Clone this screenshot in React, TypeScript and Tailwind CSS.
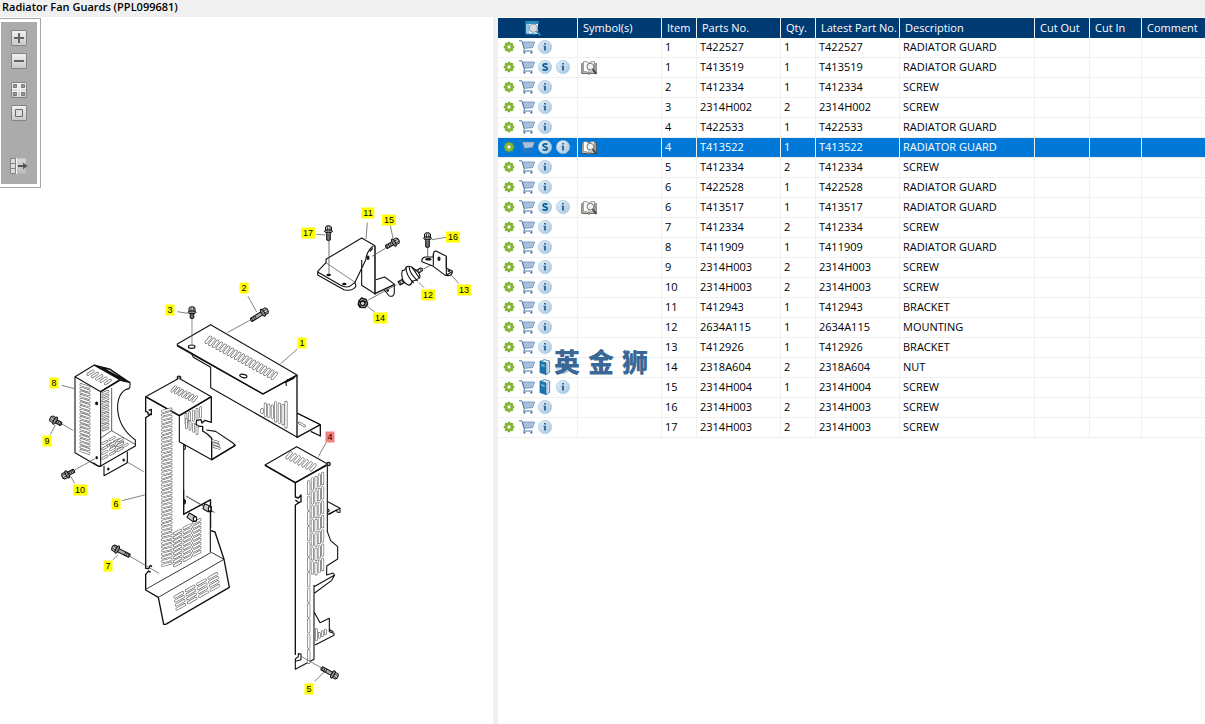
import { useState, type ReactNode } from 'react';

type Extra = 's' | 'book' | 'info';
type Part = { item: number; no: string; qty: number; desc: string; extras: Extra[]; symbol?: boolean };

const parts: Part[] = [
  { item: 1, no: 'T422527', qty: 1, desc: 'RADIATOR GUARD', extras: ['info'] },
  { item: 1, no: 'T413519', qty: 1, desc: 'RADIATOR GUARD', extras: ['s', 'info'], symbol: true },
  { item: 2, no: 'T412334', qty: 1, desc: 'SCREW', extras: ['info'] },
  { item: 3, no: '2314H002', qty: 2, desc: 'SCREW', extras: ['info'] },
  { item: 4, no: 'T422533', qty: 1, desc: 'RADIATOR GUARD', extras: ['info'] },
  { item: 4, no: 'T413522', qty: 1, desc: 'RADIATOR GUARD', extras: ['s', 'info'], symbol: true },
  { item: 5, no: 'T412334', qty: 2, desc: 'SCREW', extras: ['info'] },
  { item: 6, no: 'T422528', qty: 1, desc: 'RADIATOR GUARD', extras: ['info'] },
  { item: 6, no: 'T413517', qty: 1, desc: 'RADIATOR GUARD', extras: ['s', 'info'], symbol: true },
  { item: 7, no: 'T412334', qty: 2, desc: 'SCREW', extras: ['info'] },
  { item: 8, no: 'T411909', qty: 1, desc: 'RADIATOR GUARD', extras: ['info'] },
  { item: 9, no: '2314H003', qty: 2, desc: 'SCREW', extras: ['info'] },
  { item: 10, no: '2314H003', qty: 2, desc: 'SCREW', extras: ['info'] },
  { item: 11, no: 'T412943', qty: 1, desc: 'BRACKET', extras: ['info'] },
  { item: 12, no: '2634A115', qty: 1, desc: 'MOUNTING', extras: ['info'] },
  { item: 13, no: 'T412926', qty: 1, desc: 'BRACKET', extras: ['info'] },
  { item: 14, no: '2318A604', qty: 2, desc: 'NUT', extras: ['book', 'info'] },
  { item: 15, no: '2314H004', qty: 1, desc: 'SCREW', extras: ['book', 'info'] },
  { item: 16, no: '2314H003', qty: 2, desc: 'SCREW', extras: ['info'] },
  { item: 17, no: '2314H003', qty: 2, desc: 'SCREW', extras: ['info'] },
];

/* Centre of every callout on the drawing canvas. */
const callouts = [
  { n: 1, x: 302, y: 326 },
  { n: 2, x: 244, y: 271 },
  { n: 3, x: 170, y: 293 },
  { n: 4, x: 330, y: 420 },
  { n: 5, x: 309, y: 672 },
  { n: 6, x: 116, y: 487 },
  { n: 7, x: 108, y: 549 },
  { n: 8, x: 54, y: 366 },
  { n: 9, x: 47, y: 424 },
  { n: 10, x: 80, y: 473 },
  { n: 11, x: 368, y: 196 },
  { n: 12, x: 428, y: 278 },
  { n: 13, x: 464, y: 273 },
  { n: 14, x: 380, y: 301 },
  { n: 15, x: 389, y: 203 },
  { n: 16, x: 453, y: 220 },
  { n: 17, x: 308, y: 216 },
];

function GearIcon() {
  return (
    <svg className="size-3 shrink-0" viewBox="0 0 12 12" aria-hidden="true">
      <g fill="#7cac2b">
        {[0, 45, 90, 135].map((a) => (
          <rect key={a} x="4.8" y="0.8" width="2.4" height="10.4" rx="0.5" transform={`rotate(${a} 6 6)`} />
        ))}
        <circle cx="6" cy="6" r="4.2" fill="#86b832" />
      </g>
      <circle cx="6" cy="6" r="1.9" fill="#fff" stroke="#6f9c26" strokeWidth="0.5" />
    </svg>
  );
}

function CartIcon() {
  return (
    <svg className="h-[14px] w-4 shrink-0" viewBox="0 0 16 14" aria-hidden="true">
      <path d="M3.4 2.1h12.1l-2 5.5-8.4.6z" fill="#dbe6f2" stroke="#5b84b4" strokeWidth="0.9" />
      <path d="M6 2.5v5.4M8 2.5v5.4M10 2.5v5.4M12 2.5v5M4 4h11M4.6 6h9.7" stroke="#7d9fc8" strokeWidth="0.6" />
      <path d="M0 .8h2.8L5.5 9.4 4.4 11h9.2" fill="none" stroke="#4f79ad" strokeWidth="1" />
      <circle cx="5.4" cy="12.6" r="1.1" fill="#4371a8" />
      <circle cx="12.4" cy="12.6" r="1.1" fill="#4371a8" />
    </svg>
  );
}

function Badge({ kind }: { kind: 's' | 'info' }) {
  return (
    <svg className="size-[14px] shrink-0" viewBox="0 0 14 14" aria-hidden="true">
      <defs>
        <linearGradient id="badge" x1="0" y1="0" x2="1" y2="1">
          <stop offset="0" stopColor="#e4f0f8" />
          <stop offset="1" stopColor="#a3c6e0" />
        </linearGradient>
      </defs>
      <circle cx="7" cy="7" r="6.6" fill="url(#badge)" stroke="#a5c4dc" strokeWidth="0.7" />
      {kind === 'info' ? (
        <path d="M6 3h2v1.6H6zM5.4 5.8H8v4.6H6V6.8h-.6z" fill="#336b9f" />
      ) : (
        <path d="M9.4 4.5C8.4 3.6 5 3.3 5 5.2c0 2 4.3 1.3 4.3 3.4 0 2-3.5 1.9-4.8.8" fill="none" stroke="#0a5e95" strokeWidth="1.7" />
      )}
    </svg>
  );
}

function BookIcon() {
  return (
    <svg className="h-4 w-[14px] shrink-0" viewBox="0 0 14 16" aria-hidden="true">
      <path d="M2 2.4L6.4.6 11.6 2v11.4L8 15.6z" fill="#e4eef5" stroke="#4387b4" strokeWidth="0.9" />
      <path d="M2 2.2l6 1.6v11.8L2 13.6z" fill="#1f76ae" stroke="#0f5f98" strokeWidth="0.7" />
      <path d="M3.2 5l3.4.9v2l-3.4-.9z" fill="#73b5d8" />
      <path d="M9.8 3.2v11" stroke="#82afcb" strokeWidth="0.7" />
    </svg>
  );
}

function SymbolIcon() {
  return (
    <svg className="mt-[3px] h-[14px] w-4" viewBox="0 0 16 14" aria-hidden="true">
      <path d="M1 2L.8 12.3h5.4l1.7 1 1.8-1h5.4V2" fill="#e9e6dc" stroke="#4a463f" strokeWidth="1" />
      <path d="M2.3.8C5 .3 7 .8 7.9 2.3 9 .8 11 .3 13.6.8v10c-2.6-.4-4.6.1-5.7 1.3-1.1-1.2-3.1-1.7-5.6-1.3z" fill="#fff" stroke="#75706a" strokeWidth="0.8" />
      <path d="M7.9 2.3V12" stroke="#666" strokeWidth="0.7" />
      <circle cx="9.4" cy="5.6" r="3.4" fill="#f0f2f4" stroke="#666" strokeWidth="0.9" />
      <path d="M11.4 8l4 4.9" stroke="#4b443e" strokeWidth="1.9" />
    </svg>
  );
}

function LookupIcon() {
  return (
    <svg className="size-4" viewBox="0 0 16 16" aria-hidden="true">
      <path d="M1 1h12v13H1z" fill="#fff" />
      <path d="M.6 1h13v3H.6z" fill="#278cc0" />
      <path d="M1 1v13h10M3 4v10" fill="none" stroke="#278cc0" strokeWidth="1" />
      <path d="M3 6h7M3 8h5M3 11h5" stroke="#9bc4dd" strokeWidth="0.8" />
      <circle cx="8.3" cy="8.1" r="4.2" fill="#d5dce0" stroke="#81909b" strokeWidth="1" />
      <path d="M11.5 11.3l3.8 4" stroke="#2583b8" strokeWidth="2" />
    </svg>
  );
}

/* Row of punched slots: grey outline with a white core. */
function Slots({ x, y, dx, dy, n, vx, vy, w = 9 }: { x: number; y: number; dx: number; dy: number; n: number; vx: number; vy: number; w?: number }) {
  let d = '';
  for (let i = 0; i < n; i++) d += `M${x + dx * i} ${y + dy * i}l${vx} ${vy}`;
  return (
    <g strokeLinecap="round">
      <path d={d} stroke="#666" strokeWidth={w} />
      <path d={d} stroke="#fff" strokeWidth={w - 4} />
    </g>
  );
}

function Grid({ x, y, dx, dy, n, rx, ry, rows, vx, vy, w }: { x: number; y: number; dx: number; dy: number; n: number; rx: number; ry: number; rows: number; vx: number; vy: number; w?: number }) {
  return (
    <>
      {Array.from({ length: rows }, (_, r) => (
        <Slots key={r} x={x + rx * r} y={y + ry * r} dx={dx} dy={dy} n={n} vx={vx} vy={vy} w={w} />
      ))}
    </>
  );
}

/* Hex-head screw; the shank points down before rotation. */
function Bolt({ x, y, turn, length = 9 }: { x: number; y: number; turn: number; length?: number }) {
  return (
    <g transform={`translate(${x} ${y}) rotate(${turn})`} stroke="#111" strokeWidth="1">
      <path d={`M-1.8 1v${length}q1.8 1.2 3.6 0v-${length}z`} fill="#aaa" />
      <path d={`M-1.8 ${length - 4}h3.6M-1.8 ${length - 2}h3.6M-1.8 ${length}h3.6`} strokeWidth="0.8" />
      <path d="M-3-3L-1.4-4.2h2.8L3-3v4h-6z" fill="#ccc" />
      <ellipse cx="0" cy="1.3" rx="4" ry="1.5" fill="#888" />
      <path d="M-1-3.6v4M1.4-3.6v4" strokeWidth="0.7" />
    </g>
  );
}

function Sheet({ x, y, children }: { x: number; y: number; children: ReactNode }) {
  return <g transform={`translate(${x} ${y}) scale(0.33333)`}>{children}</g>;
}

function Drawing() {
  return (
    <svg className="block h-[707px] w-[493px]" viewBox="0 17 493 707" fill="none" stroke="#111" strokeWidth="3.3" strokeLinejoin="round" role="img" aria-label="Exploded view of the radiator fan guards">
      {/* Bracket 11, mounting 12 and bracket 13 */}
      <Sheet x={290} y={195}>
        <path d="M108 203L195 262" stroke="#444" strokeWidth="2" />
        <path d="M255 152L215 129L108 193V203L83 229V240L162 284Q188 290 198 274L195 262L179 274Q167 279 152 271L83 231" />
        <path d="M250 153Q230 168 227 195L195 262M215 195V271L257 298M258 254L284 246L314 268M248 160L240 170" />
        <path d="M283 285L298 303Q311 307 313 294V270" />
        <path d="M255 152V296L314 268" strokeWidth="4.5" />
        <g fill="#222"><ellipse cx="116" cy="240" rx="5" ry="2" /><ellipse cx="163" cy="267" rx="5" ry="2" /><ellipse cx="234" cy="188" rx="3" ry="5" /><ellipse cx="293" cy="286" rx="2" ry="3" /></g>
        <path d="M232 83L228 132M301 91L309 130M79 118L106 120M470 127L425 134M506 265L475 230M402 278L386 262M255 352L231 333" stroke="#444" strokeWidth="2" />
        <path d="M117 132V238M286 160L246 184M413 155V185M235 315L320 269M400 222L445 199" stroke="#555" strokeWidth="2.5" />
        <path d="M324 260L346 248L353 257L330 270Z" fill="#bbb" />
        <path d="M337 226Q333 236 337 250Q340 264 357 271Q366 268 366 258Q379 258 390 246Q390 232 373 222L363 215Q350 211 347 220Q344 228 337 226Z" fill="#fff" />
        <path d="M348 215Q347 240 371 264M357 214Q358 235 383 258M365 216L389 250M376 228L392 219Q398 219 397 227L387 234" />
        <path d="M328 258l5 9M335 254l5 9M384 225l5 7M390 222l5 7" strokeWidth="2.5" />
        <path d="M430 186L405 186Q393 191 396 200L430 214L466 241Q488 245 487 228L469 220V184L438 168Q431 168 430 178Z" fill="#fff" />
        <path d="M430 178V212M469 186V240L487 230" />
        <ellipse cx="447" cy="191" rx="3" ry="5" fill="#222" />
        <ellipse cx="415" cy="193" rx="8" ry="2" fill="#222" />
        <ellipse cx="477" cy="228" rx="4" ry="2" fill="#444" strokeWidth="2" />
        <g fill="#aaa" strokeWidth="4"><path d="M207 317L215 309L229 314L233 327L225 338L210 337L205 328Z" /><circle cx="218" cy="325" r="7" fill="#ddd" /><path d="M209 318l-4 9 7 9M218 318l10 3" /></g>
      </Sheet>

      {/* Guard 1 */}
      <Sheet x={150} y={270}>
        <path d="M82 222L182 164L441 315L339 372L82 228Z" fill="#fff" />
        <path d="M83 226L339 372L441 316V502L511 464V498L482 484M443 430L511 464" strokeWidth="4" />
        <path d="M124 249L130 262L182 292V353L442 502M432 320V325L405 338M408 335L409 348M428 325L410 330" />
        <ellipse cx="125" cy="230" rx="10" ry="5" />
        <ellipse cx="280" cy="318" rx="11" ry="5" transform="rotate(12 280 318)" />
        <Slots x={169} y={217} dx={11} dy={6} n={19} vx={12} vy={-15} w={10} />
        <Slots x={336} y={419} dx={0} dy={0} n={1} vx={0} vy={8} w={10} />
        <Slots x={346} y={402} dx={10.5} dy={3} n={3} vx={0} vy={34} w={9} />
        <Slots x={377} y={398} dx={11} dy={4} n={3} vx={0} vy={55} w={9} />
        <Slots x={408} y={397} dx={0} dy={0} n={1} vx={0} vy={74} w={9} />
        <Slots x={448} y={459} dx={8} dy={5} n={2} vx={8} vy={4} w={8} />
        <path d="M126 147V226" stroke="#555" strokeWidth="2" />
        <path d="M82 125L113 130M294 79L320 126M232 188L299 151M442 237L391 282" stroke="#444" strokeWidth="2" />
      </Sheet>

      {/* Guard 8 */}
      <Sheet x={30} y={350}>
        <path d="M135 80L193 45L270 89L212 125ZM135 80V308L203 348H212V125L270 89L300 97V107Q301 117 289 118Q261 132 263 180Q268 235 316 270V288L212 348" />
        <path d="M193 46L240 58L298 97M200 49L271 88M215 52L284 91M212 125L270 90L298 97" strokeWidth="4.5" />
        <path d="M245 114V242L317 284M245 242L214 263" strokeWidth="2" />
        <path d="M190 338L206 349H214M222 347V377L292 338V305" />
        <Slots x={153} y={104} dx={0} dy={11} n={19} vx={24} vy={8} w={9} />
        <Slots x={219} y={130} dx={0} dy={11} n={11} vx={15} vy={-6} w={8} />
        <Slots x={174} y={73} dx={13} dy={7} n={5} vx={15} vy={-10} w={9} />
        <Grid x={218} y={281} dx={22} dy={-12} n={2} rx={13} ry={7} rows={4} vx={13} vy={-7} w={8} />
        <Slots x={218} y={297} dx={23} dy={-12} n={3} vx={13} vy={-7} w={8} />
        <Slots x={218} y={311} dx={23} dy={-12} n={3} vx={13} vy={-7} w={8} />
        <Slots x={218} y={325} dx={23} dy={-12} n={3} vx={13} vy={-7} w={8} />
        <g fill="#222"><ellipse cx="200" cy="160" rx="3" ry="4" /><ellipse cx="200" cy="323" rx="2" ry="3" /><ellipse cx="281" cy="330" rx="2" ry="3" /><ellipse cx="235" cy="357" rx="2" ry="3" /></g>
        <path d="M95 106L134 116M61 254L76 225M96 222L130 242M135 359L195 326M134 400L121 378M287 333L341 365M276 452L344 435" stroke="#444" strokeWidth="2" />
      </Sheet>

      {/* Guard 6 */}
      <Sheet x={130} y={365}>
        <path d="M47 95L147 40L244 95L148 152Z" fill="#fff" />
        <path d="M47 95L148 152L244 95" strokeWidth="4.5" />
        <path d="M142 42V35Q147 31 152 35V43" fill="#777" />
        <path d="M47 95V139L54 142V147L64 149V133L56 136M47 611V158L60 150" strokeWidth="4" />
        <path d="M148 152V230L245 284L316 241L309 234L257 199L229 195M161 238V448L242 404V490M163 240Q170 250 163 254M163 402Q170 410 163 416" />
        <path d="M244 95V172L225 166L216 174L213 164L200 166L198 178L207 184L218 184V198L232 207L245 220V284L316 241" strokeWidth="4" />
        <Slots x={126} y={78} dx={10.5} dy={5} n={7} vx={10} vy={-12} w={9} />
        <Slots x={98} y={139} dx={0} dy={11} n={43} vx={25} vy={-7} w={9} />
        <Slots x={168} y={148} dx={11} dy={-5} n={5} vx={0} vy={28} w={8} />
        <Slots x={169} y={164} dx={11} dy={5} n={2} vx={0} vy={24} w={8} />
        <Slots x={191} y={177} dx={10} dy={7} n={2} vx={0} vy={22} w={8} />
        <Slots x={248} y={227} dx={2} dy={9} n={3} vx={16} vy={5} w={8} />
        <path d="M168 394L250 441" stroke="#444" strokeWidth="2" />
      </Sheet>
      <Sheet x={90} y={490}>
        <path d="M167 235L176 236L181 226L186 230M167 253L176 243L182 247M167 252V300L205 322L221 403H227L418 292L402 208L375 126L363 122" strokeWidth="4" />
        <path d="M167 298L364 187L402 208L205 322" strokeWidth="2.5" />
        <path d="M281 0V73L361 29V187M281 30Q290 38 281 44" />
        <Grid x={253} y={131} dx={29} dy={-16} n={3} rx={0} ry={12} rows={9} vx={19} vy={-10} w={9} />
        <Grid x={255} y={321} dx={34} dy={-19} n={4} rx={2} ry={12} rows={4} vx={23} vy={-13} w={9} />
        <path d="M118 198L207 250M68 210L85 193M289 18L375 68" stroke="#444" strokeWidth="2" />
        <g fill="#ccc"><path d="M298 69L318 80V94L308 94L291 82Z" /><ellipse cx="315" cy="87" rx="5" ry="7" fill="#fff" /><path d="M344 41L364 50V65L354 65L339 56Z" /><ellipse cx="359" cy="57" rx="4" ry="7" fill="#fff" /></g>
      </Sheet>

      {/* Guard 4 */}
      <Sheet x={250} y={425}>
        <path d="M45 120L140 65L233 117L136 173Z" fill="#fff" />
        <path d="M45 121L136 173L230 121" strokeWidth="4.5" />
        <circle cx="236" cy="117" r="5" fill="#bbb" />
        <path d="M136 173V216L145 219L153 210V230L147 233L136 225M136 690V240L147 233" strokeWidth="4" />
        <path d="M232 122V320L242 347L263 365V402L230 423V450L249 444L254 450L245 466L194 504M192 485L254 450M192 480V703L136 733V702L145 695V686L153 687V704L136 709M192 560L210 593L238 580V620L252 625V631L195 660M239 614L250 620" />
        <path d="M234 230L270 250V262L261 261V254L234 268M270 250L235 269M234 252Q241 258 234 261" />
        <Slots x={111} y={98} dx={12} dy={6} n={7} vx={12} vy={-14} w={10} />
        <Slots x={176} y={171} dx={0} dy={46} n={12} vx={0} vy={35} w={10} />
        <Slots x={187} y={161} dx={0} dy={42} n={7} vx={0} vy={31} w={9} />
        <Slots x={198} y={157} dx={0} dy={43} n={7} vx={0} vy={32} w={9} />
        <Slots x={208} y={150} dx={0} dy={43} n={7} vx={0} vy={31} w={9} />
        <Slots x={218} y={145} dx={0} dy={43} n={7} vx={0} vy={31} w={9} />
        <Slots x={199} y={614} dx={0} dy={0} n={1} vx={0} vy={30} w={8} />
        <Slots x={208} y={625} dx={9} dy={-5} n={3} vx={0} vy={12} w={8} />
        <path d="M228 53L205 95M155 695L217 730M194 769L226 738" stroke="#444" strokeWidth="2" />
      </Sheet>

      <Bolt x={328.5} y={230} turn={0} />
      <Bolt x={427.5} y={237} turn={0} />
      <Bolt x={395} y={242} turn={60} />
      <Bolt x={192} y={311} turn={0} length={6} />
      <Bolt x={264} y={312} turn={58} length={14} />
      <Bolt x={54} y={420} turn={-60} length={7} />
      <Bolt x={66} y={475} turn={-118} length={8} />
      <Bolt x={116} y={549} turn={-63} length={14} />
      <Bolt x={334} y={675} turn={119} length={13} />
    </svg>
  );
}

function ToolButton({ label, children, gap = '' }: { label: string; children: ReactNode; gap?: string }) {
  return (
    <button type="button" aria-label={label} className={`block ${gap}`}>
      <svg className="h-4 w-5" viewBox="0 0 20 16" aria-hidden="true">
        {children}
      </svg>
    </button>
  );
}

const Plate = () => <rect x="2.5" y="0.5" width="15" height="15" rx="0.5" fill="url(#plate)" stroke="#858585" />;

function Toolbar() {
  return (
    <div className="absolute left-0 top-px border border-l-0 border-[#a6a6a6] bg-white py-[3px] pl-px pr-[3px]" role="toolbar" aria-label="Drawing tools">
      <svg className="absolute size-0" aria-hidden="true">
        <defs>
          <linearGradient id="plate" x1="0" y1="0" x2="0" y2="1">
            <stop offset="0" stopColor="#f2f2f2" />
            <stop offset="1" stopColor="#c8c8c8" />
          </linearGradient>
        </defs>
      </svg>
      <div className="flex h-[162px] w-9 flex-col items-center bg-[#ababab] pt-2">
        <ToolButton label="Zoom in">
          <path d="M17 5l2.5 3L17 11z" fill="#ddd" stroke="#888" strokeWidth="0.7" />
          <Plate />
          <path d="M5 8h10M10 3v10" stroke="#656565" strokeWidth="2" />
        </ToolButton>
        <ToolButton label="Zoom out" gap="mt-[7px]">
          <path d="M3 5L.5 8 3 11z" fill="#ddd" stroke="#888" strokeWidth="0.7" />
          <Plate />
          <path d="M5 8h10" stroke="#656565" strokeWidth="2" />
        </ToolButton>
        <ToolButton label="Fit to window" gap="mt-[13px]">
          <Plate />
          <path d="M8.5 1v14M11.5 1v14M3 6.5h14M3 9.5h14" stroke="#f3f3f3" />
          <path d="M4.5 2.5h3v3h-3zM12.5 2.5h3v3h-3zM4.5 10.5h3v3h-3zM12.5 10.5h3v3h-3z" fill="#999" stroke="#777" />
        </ToolButton>
        <ToolButton label="Actual size" gap="mt-[7px]">
          <Plate />
          <path d="M6.5 4.5h7v7h-7z" fill="#ddd" stroke="#6b6b6b" />
        </ToolButton>
        <ToolButton label="Toggle parts list" gap="mt-[37px]">
          <path d="M7 .5h10v15H7z" fill="url(#plate)" opacity="0.6" />
          <path d="M1.5.5h5v15h-5zM1.5 5.5h5M1.5 10.5h5" fill="#ddd" stroke="#858585" />
          <path d="M7.5 0v16" stroke="#f4f4f4" />
          <path d="M9 8h6" stroke="#555" strokeWidth="2" />
          <path d="M14 4.5L18.5 8 14 11.5z" fill="#555" />
        </ToolButton>
      </div>
    </div>
  );
}

const headings = ['Item', 'Parts No.', 'Qty.', 'Latest Part No.', 'Description', 'Cut Out', 'Cut In', 'Comment'];

export default function App() {
  const [selected, setSelected] = useState(5);
  const activeItem = parts[selected].item;

  return (
    <div className="flex min-h-screen flex-col bg-[#f0f0f0] font-['Open_Sans','Noto_Sans',sans-serif] text-[11px] text-black">
      <h1 className="h-[17px] pl-[2px] text-[11px] font-semibold leading-[14px]">Radiator Fan Guards (PPL099681)</h1>

      <div className="flex grow">
        <section className="relative shrink-0 bg-white" aria-label="Drawing">
          <Drawing />
          {callouts.map((c) => (
            <button
              key={c.n}
              type="button"
              onClick={() => setSelected(parts.findIndex((p) => p.item === c.n))}
              className={`absolute h-[11px] -translate-x-1/2 -translate-y-1/2 px-[2px] font-['Liberation_Sans',Arial,sans-serif] text-[9px] leading-[11px] ${c.n === activeItem ? 'bg-[#f08080]' : 'bg-[#ffff00]'}`}
              style={{ left: c.x, top: c.y }}
            >
              {c.n}
            </button>
          ))}
          <Toolbar />
        </section>

        <section className="relative ml-[5px] min-w-0 grow bg-white pt-px" aria-label="Parts list">
          <table className="w-full table-fixed border-collapse text-left">
            <colgroup>
              <col className="w-[80px]" />
              <col className="w-[84px]" />
              <col className="w-[35px]" />
              <col className="w-[84px]" />
              <col className="w-[35px]" />
              <col className="w-[84px]" />
              <col className="w-[135px]" />
              <col className="w-[55px]" />
              <col className="w-[52px]" />
              <col />
            </colgroup>
            <thead>
              <tr className="h-5 bg-[#003a73] text-white">
                <th className="p-0 shadow-[inset_-1px_0_0_#f0f0f0]" aria-label="Actions">
                  <div className="flex justify-center pr-[10px]">
                    <LookupIcon />
                  </div>
                </th>
                <th className="p-0 pl-[5px] font-normal leading-5 shadow-[inset_-1px_0_0_#f0f0f0]">Symbol(s)</th>
                {headings.map((h) => (
                  <th key={h} className="whitespace-nowrap p-0 pl-[5px] font-normal leading-5 shadow-[inset_-1px_0_0_#f0f0f0] last:shadow-none">
                    {h}
                  </th>
                ))}
              </tr>
            </thead>
            <tbody>
              {parts.map((p, i) => {
                const cell = 'whitespace-nowrap p-0 pl-[3px] align-top leading-[18px] shadow-[inset_-1px_-1px_0_#f0f0f0] last:shadow-[inset_0_-1px_0_#f0f0f0]';
                return (
                  <tr key={i} onClick={() => setSelected(i)} aria-selected={i === selected} className={`h-5 cursor-default ${i === selected ? 'bg-[#0078d7] text-white' : 'bg-white'}`}>
                    <td className={cell}>
                      <div className="flex h-[18px] items-center gap-1 pl-[2px]">
                        <GearIcon />
                        <CartIcon />
                        <span className="-ml-px flex items-center gap-1">
                          {p.extras.map((e) => (e === 'book' ? <BookIcon key={e} /> : <Badge key={e} kind={e} />))}
                        </span>
                      </div>
                    </td>
                    <td className={cell}>{p.symbol && <SymbolIcon />}</td>
                    <td className={cell}>{p.item}</td>
                    <td className={cell}>{p.no}</td>
                    <td className={cell}>{p.qty}</td>
                    <td className={cell}>{p.no}</td>
                    <td className={cell}>{p.desc}</td>
                    <td className={cell} />
                    <td className={cell} />
                    <td className={cell} />
                  </tr>
                );
              })}
            </tbody>
          </table>
          <div className="pointer-events-none absolute left-14 top-[328px] flex gap-2 font-['Noto_Sans_CJK_SC',sans-serif] text-[26px] font-black leading-8 text-[#3a6896]">
            <span>英</span>
            <span>金</span>
            <span>狮</span>
          </div>
        </section>
      </div>
    </div>
  );
}
